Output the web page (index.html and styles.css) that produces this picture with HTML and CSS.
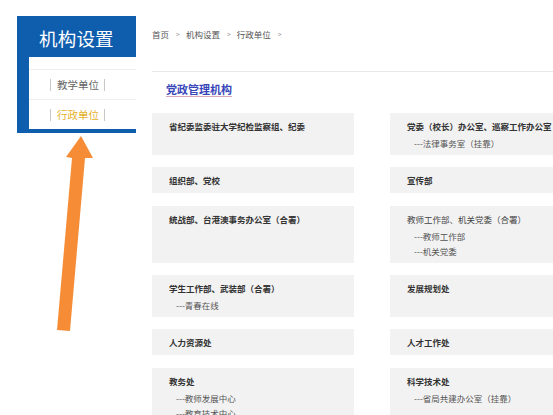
FILE: index.html
```html
<!DOCTYPE html>
<html lang="zh-CN">
<head>
<meta charset="utf-8">
<title>机构设置 - 行政单位</title>
<link rel="stylesheet" href="styles.css">
</head>
<body>
<div class="page">
  <aside class="sidebar">
    <div class="side-title">机构设置</div>
    <ul class="side-list">
      <li class="side-spacer"></li>
      <li class="side-item"><span class="side-link">教学单位</span></li>
      <li class="side-item active"><span class="side-link">行政单位</span></li>
    </ul>
  </aside>

  <main class="main">
    <nav class="crumbs">
      <span>首页</span><span class="sep">&gt;</span><span>机构设置</span><span class="sep">&gt;</span><span>行政单位</span><span class="sep">&gt;</span>
    </nav>
    <section class="section">
      <h2 class="section-title"><span>党政管理机构</span></h2>
      <div class="grid">
        <div class="card"><div class="card-title">省纪委监委驻大学纪检监察组、纪委</div></div>
        <div class="card"><div class="card-title">党委（校长）办公室、巡察工作办公室（合署）</div><div class="sub">---法律事务室（挂靠）</div></div>

        <div class="card"><div class="card-title">组织部、党校</div></div>
        <div class="card"><div class="card-title">宣传部</div></div>

        <div class="card"><div class="card-title">统战部、台港澳事务办公室（合署）</div></div>
        <div class="card"><div class="card-title light">教师工作部、机关党委（合署）</div><div class="sub">---教师工作部</div><div class="sub">---机关党委</div></div>

        <div class="card"><div class="card-title">学生工作部、武装部（合署）</div><div class="sub">---青春在线</div></div>
        <div class="card"><div class="card-title">发展规划处</div></div>

        <div class="card"><div class="card-title">人力资源处</div></div>
        <div class="card"><div class="card-title">人才工作处</div></div>

        <div class="card"><div class="card-title">教务处</div><div class="sub">---教师发展中心</div><div class="sub">---教育技术中心</div></div>
        <div class="card"><div class="card-title">科学技术处</div><div class="sub">---省局共建办公室（挂靠）</div></div>
      </div>
    </section>
  </main>

  <svg class="arrow" width="553" height="415" viewBox="0 0 553 415" aria-hidden="true">
    <polygon points="57,330 70,331 85,158 93,158 81,136 66,157 72,158" fill="#f68d36"/>
  </svg>
</div>
</body>
</html>
```

FILE: styles.css
```css
html, body {
  margin: 0;
  padding: 0;
  background: #ffffff;
  overflow: hidden;
}
body {
  width: 553px;
  height: 415px;
  font-family: "Noto Sans CJK SC", "Noto Sans", sans-serif;
  color: #333;
}
.page {
  position: relative;
  display: flex;
  align-items: flex-start;
  padding: 16px 0 0 17px;
  width: 553px;
  height: 415px;
  box-sizing: border-box;
  overflow: hidden;
}

/* Sidebar */
.sidebar {
  flex: 0 0 119px;
  width: 119px;
  background: #0f5eae;
  padding: 0 0 4px 12px;
  box-sizing: border-box;
}
.side-title {
  height: 41px;
  line-height: 44px;
  padding-left: 10px;
  color: #ffffff;
  font-size: 18.5px;
  letter-spacing: 0.2px;
}
.side-list {
  list-style: none;
  margin: 0;
  padding: 0;
  background: #ffffff;
}
.side-spacer {
  height: 12px;
  border-bottom: 1px solid #eeeeee;
}
.side-item {
  height: 29px;
  display: flex;
  align-items: center;
  padding-left: 21px;
}
.side-item + .side-item {
  border-top: 1px solid #eeeeee;
}
.side-link {
  font-size: 10.5px;
  line-height: 12px;
  color: #666;
  padding: 0 5px 0 6px;
  border-left: 1px solid #c8c8c8;
  border-right: 1px solid #c8c8c8;
}
.side-item.active .side-link {
  color: #e4b02a;
}

/* Main */
.main {
  flex: 0 0 440px;
  width: 440px;
  margin-left: 16px;
  padding-top: 12px;
}
.crumbs {
  height: 12px;
  line-height: 12px;
  font-size: 8.5px;
  color: #555;
  display: flex;
  align-items: center;
}
.crumbs .sep {
  font-size: 7px;
  color: #999;
  margin: 0 6px 0 7px;
}
.section {
  margin-top: 31px;
  border-top: 1px solid #e8e8e8;
}
.section-title {
  margin: 0;
  padding: 10px 0 0 14px;
  height: 15px;
  line-height: 14px;
  font-size: 11px;
  font-weight: bold;
}
.section-title span {
  display: inline-block;
  color: #3845b8;
  border-bottom: 1.5px solid #d7a8b8;
  line-height: 14px;
}
.grid {
  margin-top: 16px;
  display: grid;
  grid-template-columns: 202px 202px;
  column-gap: 36px;
  row-gap: 12.5px;
}
.card {
  background: #f2f2f2;
  padding: 7px 17px 3px 17px;
  min-width: 0;
}
.card-title {
  font-size: 8.5px;
  line-height: 12px;
  font-weight: bold;
  color: #333;
  white-space: nowrap;
  margin-bottom: 4px;
}
.card-title.light {
  font-weight: normal;
  color: #444;
}
.sub {
  font-size: 8.5px;
  line-height: 15.5px;
  padding-left: 7px;
  color: #555;
  white-space: nowrap;
}

/* Annotation arrow overlay */
.arrow {
  position: absolute;
  left: 0;
  top: 0;
  pointer-events: none;
}
```
